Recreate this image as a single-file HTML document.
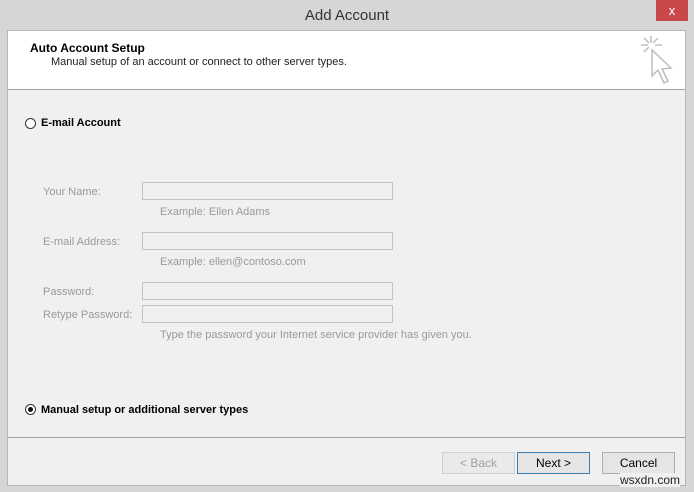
<!DOCTYPE html>
<html><head><style>
body{margin:0;width:694px;height:492px;background:#d6d6d6;font-family:"Liberation Sans",sans-serif;position:relative;overflow:hidden}
.abs{position:absolute}
.title{left:0;width:694px;text-align:center;top:7px;font-size:15px;color:#333}
.close{left:656px;top:0;width:32px;height:21px;background:#c9494a;color:#fff;text-align:center;font-size:13px;line-height:21px}
.win{left:7px;top:30px;width:679px;height:456px;background:#f0f0f0;border:1px solid #b5b5b5;box-sizing:border-box}
.hdr{left:8px;top:31px;width:677px;height:58px;background:#fff;border-bottom:1px solid #a0a0a0}
.lbl{font-size:11px;color:#9a9a9a}
.box{left:142px;width:251px;height:18px;border:1px solid #c3c3c3;box-sizing:border-box;background:#f0f0f0}
.radio{width:11px;height:11px;border:1px solid #333;border-radius:50%;background:#fff;box-sizing:border-box}
.btn{top:452px;height:22px;width:73px;border:1px solid #adadad;background:#e5e5e5;box-sizing:border-box;font-size:12px;text-align:center;line-height:20px;color:#000}
</style></head><body>
<div class="abs title">Add Account</div>
<div class="abs close">x</div>
<div class="abs win"></div>
<div class="abs hdr"></div>
<div class="abs" style="left:30px;top:41px;font-size:12px;font-weight:bold">Auto Account Setup</div>
<div class="abs" style="left:51px;top:56px;font-size:11px;color:#222">Manual setup of an account or connect to other server types.</div>
<svg class="abs" style="left:630px;top:30px" width="50" height="60" viewBox="630 30 50 60" fill="none" stroke="#bdbdbd" stroke-width="1.5">
<path d="M651,36v7M641,45h7M655,45h7M644,38l5,5M658,38l-5,5M644,52l5-5"/>
<path d="M652,50 L652,76 L658,70 L664,83 L668,81 L662,69 L671,68 Z"/>
</svg>
<div class="abs radio" style="left:25px;top:118px"></div>
<div class="abs" style="left:41px;top:117px;font-size:11px;font-weight:bold">E-mail Account</div>
<div class="abs lbl" style="left:43px;top:186px">Your Name:</div>
<div class="abs box" style="top:182px"></div>
<div class="abs lbl" style="left:160px;top:206px">Example: Ellen Adams</div>
<div class="abs lbl" style="left:43px;top:236px">E-mail Address:</div>
<div class="abs box" style="top:232px"></div>
<div class="abs lbl" style="left:160px;top:256px">Example: ellen@contoso.com</div>
<div class="abs lbl" style="left:43px;top:286px">Password:</div>
<div class="abs box" style="top:282px"></div>
<div class="abs lbl" style="left:43px;top:309px">Retype Password:</div>
<div class="abs box" style="top:305px"></div>
<div class="abs lbl" style="left:160px;top:329px">Type the password your Internet service provider has given you.</div>
<div class="abs radio" style="left:25px;top:404px"></div>
<div class="abs" style="left:28px;top:407px;width:5px;height:5px;border-radius:50%;background:#111"></div>
<div class="abs" style="left:41px;top:404px;font-size:11px;font-weight:bold">Manual setup or additional server types</div>
<div class="abs" style="left:8px;top:437px;width:677px;height:1px;background:#a0a0a0"></div>
<div class="abs btn" style="left:442px;color:#a0a0a0;border-color:#d0d0d0;background:#eaeaea">&lt; Back</div>
<div class="abs btn" style="left:517px;border-color:#3c7fb1">Next &gt;</div>
<div class="abs btn" style="left:602px">Cancel</div>
<div class="abs" style="left:620px;top:473px;font-size:12px;color:#222;background:#f0f0f0">wsxdn.com</div>
</body></html>
